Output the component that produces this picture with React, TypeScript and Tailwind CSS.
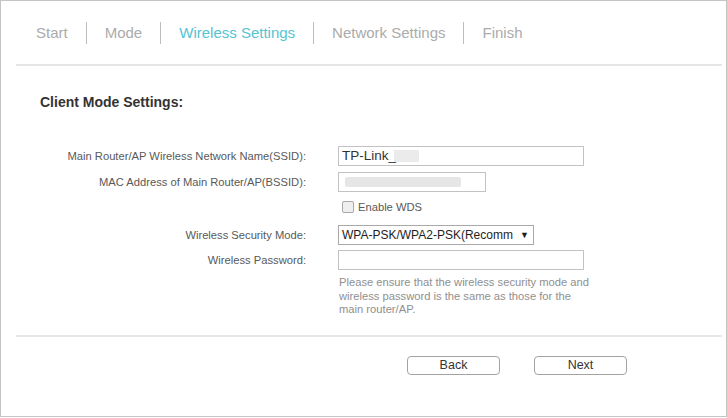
import React from "react";

const NavItem = ({ label, active, first }: { label: string; active?: boolean; first?: boolean }) => (
  <div
    className={
      "flex items-center h-[22px] px-[18px] " +
      (first ? "pl-0 " : "border-l border-[#bdbdbd] ") +
      (active ? "text-[#55c4d2]" : "text-[#ababab]")
    }
  >
    {label}
  </div>
);

const Row = ({ label, children, className }: { label: string; children: React.ReactNode; className?: string }) => (
  <div className={"flex items-center h-[20px] " + (className || "")}>
    <div className="w-[305px] text-right text-[11.2px] text-[#595959] whitespace-nowrap">{label}</div>
    <div className="ml-[32px] flex items-center">{children}</div>
  </div>
);

export default function App() {
  return (
    <div className="w-[727px] h-[417px] border border-[#c4c4c4] bg-white flex flex-col font-['Liberation_Sans',Arial,sans-serif]">
      <div className="flex items-center mt-[21px] pl-[35px] text-[15px] leading-[22px]">
        <NavItem label="Start" first />
        <NavItem label="Mode" />
        <NavItem label="Wireless Settings" active />
        <NavItem label="Network Settings" />
        <NavItem label="Finish" />
      </div>
      <div className="mt-[20px] ml-[15px] mr-[4px] h-[2px] bg-[#e6e6e6]" />
      <div className="mt-[28px] pl-[39px] text-[14px] leading-[16px] font-bold text-[#333333]">Client Mode Settings:</div>

      <Row label="Main Router/AP Wireless Network Name(SSID):" className="mt-[36px]">
        <div className="w-[246px] h-[20px] border border-[#c2c2c2] flex items-center pl-[3px] text-[13.5px] text-[#333333]">
          <span>TP-Link_</span>
          <span className="inline-block w-[25px] h-[12px] bg-[#ebebeb] -ml-[2px]" />
        </div>
      </Row>
      <Row label="MAC Address of Main Router/AP(BSSID):" className="mt-[6px]">
        <div className="w-[148px] h-[20px] border border-[#c2c2c2] flex items-center pl-[6px]">
          <span className="inline-block w-[116px] h-[10px] bg-[#e6e6e6] rounded-[2px]" />
        </div>
      </Row>
      <div className="flex items-center h-[20px] mt-[5px] pl-[341px]">
        <span className="inline-block w-[12px] h-[12px] rounded-[2px] border border-[#a8a8a8] bg-[#efefef]" />
        <span className="ml-[4px] text-[11.2px] text-[#595959]">Enable WDS</span>
      </div>
      <Row label="Wireless Security Mode:" className="mt-[8px]">
        <div className="w-[196px] h-[20px] border border-[#a9a9a9] flex items-center text-[12px] text-[#1e1e1e]">
          <div className="w-[178px] overflow-hidden whitespace-nowrap pl-[3px]">WPA-PSK/WPA2-PSK(Recomm</div>
          <div className="ml-[3px] text-[9px] text-[#1e1e1e] leading-none">▼</div>
        </div>
      </Row>
      <Row label="Wireless Password:" className="mt-[5px]">
        <div className="w-[246px] h-[20px] border border-[#c2c2c2]" />
      </Row>
      <div className="mt-[6px] ml-[338px] w-[254px] text-[11.2px] leading-[13.5px] text-[#8f8f8f]">
        Please ensure that the wireless security mode and wireless password is the same as those for the main router/AP.
      </div>
      <div className="mt-[18px] ml-[15px] mr-[4px] h-[2px] bg-[#e6e6e6]" />
      <div className="flex mt-[19px] pl-[406px] gap-[34px]">
        <div className="w-[93px] h-[19px] border border-[#a3a3a3] rounded-[4px] flex items-center justify-center text-[12.5px] text-[#333333]">Back</div>
        <div className="w-[93px] h-[19px] border border-[#a3a3a3] rounded-[4px] flex items-center justify-center text-[12.5px] text-[#333333]">Next</div>
      </div>
    </div>
  );
}
